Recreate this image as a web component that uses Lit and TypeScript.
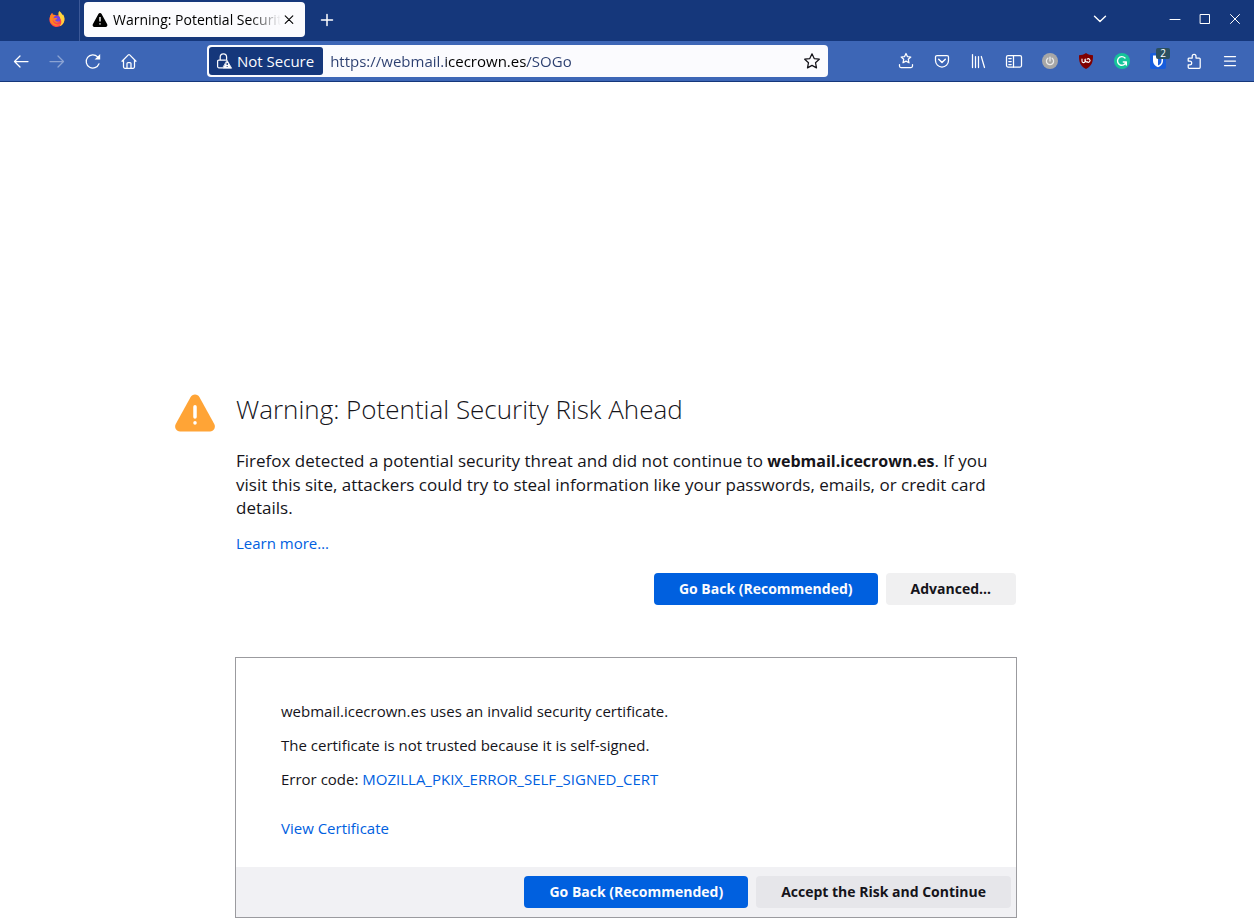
import { LitElement, html, css, svg } from "lit";
import { customElement, property, state } from "lit/decorators.js";

type Glyph = ReturnType<typeof svg>;

const icons: Record<string, Glyph> = {
  back: svg`<path d="M15 8.5H1.8M7 3 1.5 8.5 7 14"/>`,
  forward: svg`<path d="M1 8.5H14.2M9 3 14.5 8.5 9 14"/>`,
  reload: svg`<path d="M14 10.8A6.6 6.6 0 1 1 12.6 3.9L13.2 4.5"/><path d="M15.2 1V6.6H9.6Z" fill="currentColor" stroke="none"/>`,
  home: svg`<path d="M1 8.2 7.3 1.9A1 1 0 0 1 8.7 1.9L15 8.2M2.5 7V13.8A1.5 1.5 0 0 0 4 15.3H12A1.5 1.5 0 0 0 13.5 13.8V7M6 15V10.5A1 1 0 0 1 7 9.5H9A1 1 0 0 1 10 10.5V15"/>`,
  star: svg`<path d="M8 .8 10.2 5.6 15.3 6.2 11.5 9.7 12.5 14.9 8 12.4 3.5 14.9 4.5 9.7 .7 6.2 5.8 5.6Z"/>`,
  bookmarks: svg`<path d="M8 .5 9.4 3.6 12.8 4 10.3 6.3 11 9.8 8 8.1 5 9.8 5.7 6.3 3.2 4 6.6 3.6Z"/><path d="M1.5 11.5V13A1.5 1.5 0 0 0 3 14.5H13A1.5 1.5 0 0 0 14.5 13V11.5"/>`,
  pocket: svg`<path d="M3 2.5H13A1.5 1.5 0 0 1 14.5 4V7.5A6.5 6.5 0 0 1 1.5 7.5V4A1.5 1.5 0 0 1 3 2.5Z"/><path d="M4.7 6.3 8 9.5 11.3 6.3" stroke-width="1.5"/>`,
  library: svg`<path d="M2.5 1.5V14.5M5.5 3.5V14.5M8.5 3.5V14.5M11.3 3.5 14.5 14.5"/>`,
  sidebar: svg`<rect x=".5" y="2.5" width="15" height="11.5" rx="1.5"/><path d="M7.5 2.5V14M2.8 5.5H5.2M2.8 8.5H5.2M2.8 11.5H5.2"/>`,
  power: svg`<circle cx="8" cy="8" r="8" fill="#a7a7a7" stroke="none"/><path d="M5.9 5.2A3.6 3.6 0 1 0 10.1 5.2M8 4V8" stroke="#ececec"/>`,
  shield: svg`<path d="M8 0C10 1.6 12.5 2.2 15 2.2C15 8.5 14.4 12.5 8 16C1.6 12.5 1 8.5 1 2.2C3.5 2.2 6 1.6 8 0Z" fill="#800000" stroke="none"/><path d="M4 6V8A1.5 1.5 0 0 0 7 8.2V6.2M7.2 6A4 4 0 0 0 8.2 9.2M9 8.6A1.7 1.7 0 1 0 9.2 6.2" stroke="#fff" stroke-width="1.1"/>`,
  grammar: svg`<circle cx="8" cy="8" r="8" fill="#15c39a" stroke="none"/><path d="M11 5A4.3 4.3 0 1 0 12 9H9.3M12.3 9V12" stroke="#fff" stroke-width="1.4"/>`,
  vault: svg`<rect width="16" height="16" rx="2" fill="#175ddc" stroke="none"/><path d="M3 2.5H13V8C13 11 10.8 13 8 14.3C5.2 13 3 11 3 8Z" fill="#fff" stroke="none"/><path d="M8 4H11.5V8C11.5 10 10 11.6 8 12.6Z" fill="#175ddc" stroke="none"/>`,
  puzzle: svg`<path d="M2.2 8V6A1 1 0 0 1 3.2 5H6.2V3.2A1.9 1.9 0 0 1 10 3.2V5H13.2A1 1 0 0 1 14.2 6V14.3A1 1 0 0 1 13.2 15.3H3.2A1 1 0 0 1 2.2 14.3V11.8H3.8A1.9 1.9 0 0 0 3.8 8Z"/>`,
  menu: svg`<path d="M2.5 3.5H13.5M2.5 8H13.5M2.5 12.5H13.5"/>`,
  plus: svg`<path d="M8 2.5V13.5M2.5 8H13.5" stroke-width="1.5"/>`,
  cross: svg`<path d="M4.2 3.8 11.8 11.4M11.8 3.8 4.2 11.4" stroke-width="1.1"/>`,
  chevron: svg`<path d="M2.5 5.2 8 10.6 13.5 5.2" stroke-width="1.4"/>`,
  minimize: svg`<path d="M3 8.5H13" stroke-width="1"/>`,
  maximize: svg`<rect x="3.5" y="3.5" width="9" height="9" stroke-width="1"/>`,
  close: svg`<path d="M3.5 3.5 12.5 12.5M12.5 3.5 3.5 12.5" stroke-width="1"/>`,
  lock: svg`<path d="M4.2 7V4A3.2 3.2 0 0 1 10.6 4V7M6 14.8H2.8A1.2 1.2 0 0 1 1.6 13.6V8.2A1.2 1.2 0 0 1 2.8 7H9.5"/><path d="M11.2 7.6 15.6 15.2H6.8Z" fill="currentColor" stroke="currentColor" stroke-width=".8"/><path d="M11.2 10V12M11.2 13.3V13.9" stroke="#15377b" stroke-linecap="butt"/>`,
  warning: svg`<path d="M8 1C7.3 1 6.7 1.4 6.4 2L.8 12.3C.2 13.5 1 15 2.3 15H13.7C15 15 15.8 13.5 15.2 12.3L9.6 2C9.3 1.4 8.7 1 8 1Z" fill="currentColor" stroke="none"/><path d="M8 5V9.4M8 11.2V12.6" stroke="#fff" stroke-width="1.4" stroke-linecap="butt"/>`,
  alert: svg`<path d="M8 .6C7.2 .6 6.6 1 6.2 1.7L.3 12.4C-.4 13.8 .5 15.4 2 15.4H14C15.5 15.4 16.4 13.8 15.7 12.4L9.8 1.7C9.4 1 8.8 .6 8 .6Z" fill="currentColor" stroke="none"/><path d="M8 5.5V9.6M8 11.9V12" stroke="#fff" stroke-width="1.4"/>`,
  fox: svg`<path d="M.9 6C1.3 4.4 2.2 3 3.2 2.1L3.9 4C5 3.7 6 3.9 7 4.5L11 4L14.4 4.5C15.6 6.6 15.8 9.3 14.7 11.6C13.5 14.3 10.9 16 8 16C4.1 16 .8 13.1 .4 9.2C.3 8 .5 7 .9 6Z" fill="#ff3f50" stroke="none"/><path d="M.9 6C1.3 4.4 2.2 3 3.2 2.1L3.9 4C5 3.7 6 3.9 7 4.5C6 5.2 5.6 6.2 6.5 7.2L3.6 9C3.9 11 5 12.5 7 13.3C9 14.2 11.5 13.5 13 12C10.5 16 3.5 15.5 1.5 11C.7 9.2 .6 7.5 .9 6Z" fill="#ff861f" stroke="none"/><path d="M10.2 0C12 1.2 13 2.7 13.3 4.1L14 3.2C15.9 5.9 16 9.3 14.5 12C13.7 13.5 12.3 14.7 10.8 15.3C13 12.3 12.8 9.4 11 7C9.4 5 8.6 2.3 10.2 0Z" fill="#ffd43c" stroke="none"/><circle cx="7.8" cy="8.2" r="3.4" fill="#7542e5" stroke="none"/><path d="M3.5 7.6C4.6 6.6 6.6 6.8 8.4 7.3C7.5 8.6 6.8 8.7 6 8.8C6.2 10.4 8.4 11.2 10.4 10.3C9.2 13 4.2 12.6 3.5 7.6Z" fill="#ff7c24" stroke="none"/>`,
};

@customElement("ui-icon")
export class UiIcon extends LitElement {
  @property() name = "";

  static styles = css`
    :host {
      display: inline-flex;
      flex: none;
      width: 16px;
      height: 16px;
    }
    .glyph {
      width: 100%;
      height: 100%;
      overflow: visible;
      fill: none;
      stroke: currentColor;
      stroke-width: 1.25;
      stroke-linecap: round;
      stroke-linejoin: round;
    }
  `;

  render() {
    return html`<svg class="glyph" viewBox="0 0 16 16" aria-hidden="true">${icons[this.name]}</svg>`;
  }
}

@customElement("tab-strip")
export class TabStrip extends LitElement {
  static styles = css`
    :host {
      display: flex;
      align-items: center;
      height: 41px;
      background: #15377b;
      color: #fff;
    }
    button {
      display: flex;
      align-items: center;
      justify-content: center;
      padding: 0;
      border: 0;
      background: none;
      color: inherit;
      font: inherit;
    }
    .pinned {
      align-self: stretch;
      justify-content: flex-end;
      width: 80px;
      padding: 0 14px 4px 0;
      border-right: 1px solid #3c5998;
      box-sizing: border-box;
    }
    .tab {
      display: flex;
      align-items: center;
      width: 221px;
      height: 35px;
      margin: 0 14px 2px 4px;
      padding: 0 8px;
      box-sizing: border-box;
      border-radius: 4px;
      background: #fbfbfe;
      color: #000;
    }
    .title {
      flex: 1;
      min-width: 0;
      margin-left: 5px;
      overflow: hidden;
      font-size: 14px;
      white-space: nowrap;
      mask-image: linear-gradient(to left, transparent, #000 32px);
    }
    .add {
      margin-bottom: 2px;
    }
    .spring {
      flex: 1;
    }
    .controls {
      display: flex;
      gap: 14px;
      padding: 0 11px 4px 0;
    }
    .list {
      margin-right: 45px;
    }
  `;

  render() {
    return html`
      <button class="pinned" aria-label="Firefox View"><ui-icon name="fox"></ui-icon></button>
      <div class="tab">
        <ui-icon name="warning"></ui-icon>
        <span class="title">Warning: Potential Security Risk Ahead</span>
        <button aria-label="Close tab"><ui-icon name="cross"></ui-icon></button>
      </div>
      <button class="add" aria-label="New tab"><ui-icon name="plus"></ui-icon></button>
      <span class="spring"></span>
      <div class="controls">
        <button class="list" aria-label="List all tabs"><ui-icon name="chevron"></ui-icon></button>
        <button aria-label="Minimize"><ui-icon name="minimize"></ui-icon></button>
        <button aria-label="Maximize"><ui-icon name="maximize"></ui-icon></button>
        <button aria-label="Close"><ui-icon name="close"></ui-icon></button>
      </div>
    `;
  }
}

const extensions = [
  { icon: "bookmarks", label: "Bookmarks" },
  { icon: "pocket", label: "Save to Pocket" },
  { icon: "library", label: "Library" },
  { icon: "sidebar", label: "Sidebars" },
  { icon: "power", label: "Proxy switcher" },
  { icon: "shield", label: "Content blocker" },
  { icon: "grammar", label: "Grammar checker" },
  { icon: "vault", label: "Password manager", badge: "2" },
  { icon: "puzzle", label: "Extensions" },
  { icon: "menu", label: "Application menu" },
];

@customElement("nav-toolbar")
export class NavToolbar extends LitElement {
  static styles = css`
    :host {
      display: flex;
      align-items: center;
      height: 41px;
      padding: 0 16px 0 13px;
      box-sizing: border-box;
      border-bottom: 1px solid #15377b;
      background: #3d66b6;
      color: #fff;
    }
    button {
      display: flex;
      align-items: center;
      padding: 0;
      border: 0;
      background: none;
      color: inherit;
      font: inherit;
    }
    .group {
      display: flex;
      gap: 20px;
    }
    .disabled {
      opacity: 0.4;
    }
    .address {
      display: flex;
      flex: 1;
      align-items: center;
      max-width: 621px;
      height: 32px;
      margin: 0 auto 0 70px;
      padding: 2px 8px 2px 2px;
      box-sizing: border-box;
      border-radius: 4px;
      background: #fbfbfe;
      color: #15141a;
    }
    .identity {
      gap: 5px;
      height: 28px;
      padding: 0 9px 0 7px;
      border-radius: 3px;
      background: #15377b;
      color: #fbfbfe;
      white-space: nowrap;
    }
    .url {
      flex: 1;
      min-width: 0;
      margin-left: 7px;
      padding: 0;
      border: 0;
      outline: 0;
      background: linear-gradient(90deg, #2c3f70 116px, #000 116px, #000 197px, #2c3f70 197px);
      background-clip: text;
      color: transparent;
      font: inherit;
    }
    .tool {
      position: relative;
    }
    .badge {
      position: absolute;
      top: -5px;
      left: 6px;
      width: 14px;
      border-radius: 2px;
      background: #2b5060;
      font-size: 10px;
      line-height: 11px;
      text-align: center;
    }
  `;

  render() {
    return html`
      <div class="group">
        <button aria-label="Back"><ui-icon name="back"></ui-icon></button>
        <button class="disabled" aria-label="Forward" disabled><ui-icon name="forward"></ui-icon></button>
        <button aria-label="Reload"><ui-icon name="reload"></ui-icon></button>
        <button aria-label="Home"><ui-icon name="home"></ui-icon></button>
      </div>
      <div class="address">
        <button class="identity"><ui-icon name="lock"></ui-icon>Not Secure</button>
        <input class="url" type="text" aria-label="Address" spellcheck="false" value="https://webmail.icecrown.es/SOGo" />
        <button aria-label="Bookmark this page"><ui-icon name="star"></ui-icon></button>
      </div>
      <div class="group">
        ${extensions.map(
          (item) => html`<button class="tool" aria-label=${item.label}>
            <ui-icon name=${item.icon}></ui-icon>${item.badge ? html`<span class="badge">${item.badge}</span>` : null}
          </button>`
        )}
      </div>
    `;
  }
}

@customElement("app-root")
export class AppRoot extends LitElement {
  @state() private advanced = true;

  static styles = css`
    :host {
      display: flex;
      flex-direction: column;
      min-height: 100vh;
      background: #fff;
      color: #15141a;
      font: 15px/20px "Open Sans", "Noto Sans", sans-serif;
    }
    .page {
      display: grid;
      flex: 1;
      grid-template-columns: minmax(0, 782px);
      grid-template-rows: 1fr auto 1fr;
      justify-content: center;
      padding: 0 62px 0 60px;
    }
    .summary {
      grid-row: 2;
      padding: 0 1px 13px;
    }
    .heading {
      display: flex;
      align-items: center;
      gap: 21px;
      margin-left: -61px;
    }
    .alert {
      width: 40px;
      height: 40px;
      margin-top: 8px;
      color: #ffa436;
    }
    h1 {
      margin: 0;
      font-size: 26px;
      font-weight: 300;
      line-height: 36px;
    }
    p {
      margin: 0;
    }
    .lead {
      margin-top: 16px;
      font-size: 17px;
      line-height: 23px;
    }
    .lead strong {
      font-size: 16px;
    }
    a {
      color: #0060df;
      text-decoration: none;
    }
    .more {
      margin-top: 14px;
    }
    .actions {
      display: flex;
      flex-wrap: wrap;
      justify-content: flex-end;
      gap: 8px;
    }
    .summary .actions {
      margin-top: 20px;
    }
    .action {
      height: 32px;
      padding: 0 25px;
      border: 0;
      border-radius: 4px;
      background: #f0f0f1;
      color: #15141a;
      font: inherit;
      font-size: 14px;
      font-weight: 700;
    }
    .primary {
      background: #0060df;
      color: #fbfbfe;
    }
    .panel {
      grid-row: 3;
      align-self: start;
      margin: 39px 0 3px;
      border: 1px solid #9b9b9f;
    }
    .details {
      display: grid;
      gap: 14px;
      padding: 43px 45px 29px;
    }
    .certificate {
      margin-top: 15px;
    }
    .panel .actions {
      padding: 9px 5px;
      background: #f1f1f4;
    }
    .panel .action:not(.primary) {
      background: #e6e6ea;
    }
  `;

  private toggle() {
    this.advanced = !this.advanced;
  }

  render() {
    return html`
      <tab-strip></tab-strip>
      <nav-toolbar></nav-toolbar>
      <main class="page">
        <section class="summary">
          <div class="heading">
            <ui-icon class="alert" name="alert"></ui-icon>
            <h1>Warning: Potential Security Risk Ahead</h1>
          </div>
          <p class="lead">
            Firefox detected a potential security threat and did not continue to <strong>webmail.icecrown.es</strong>. If
            you visit this site, attackers could try to steal information like your passwords, emails, or credit card details.
          </p>
          <p class="more"><a href="#more">Learn more…</a></p>
          <div class="actions">
            <button class="action primary">Go Back (Recommended)</button>
            <button class="action" @click=${this.toggle}>Advanced…</button>
          </div>
        </section>
        ${this.advanced
          ? html`<section class="panel">
              <div class="details">
                <p>webmail.icecrown.es uses an invalid security certificate.</p>
                <p>The certificate is not trusted because it is self-signed.</p>
                <p>Error code: <a href="#code">MOZILLA_PKIX_ERROR_SELF_SIGNED_CERT</a></p>
                <p class="certificate"><a href="#certificate">View Certificate</a></p>
              </div>
              <div class="actions">
                <button class="action primary">Go Back (Recommended)</button>
                <button class="action">Accept the Risk and Continue</button>
              </div>
            </section>`
          : null}
      </main>
    `;
  }
}
